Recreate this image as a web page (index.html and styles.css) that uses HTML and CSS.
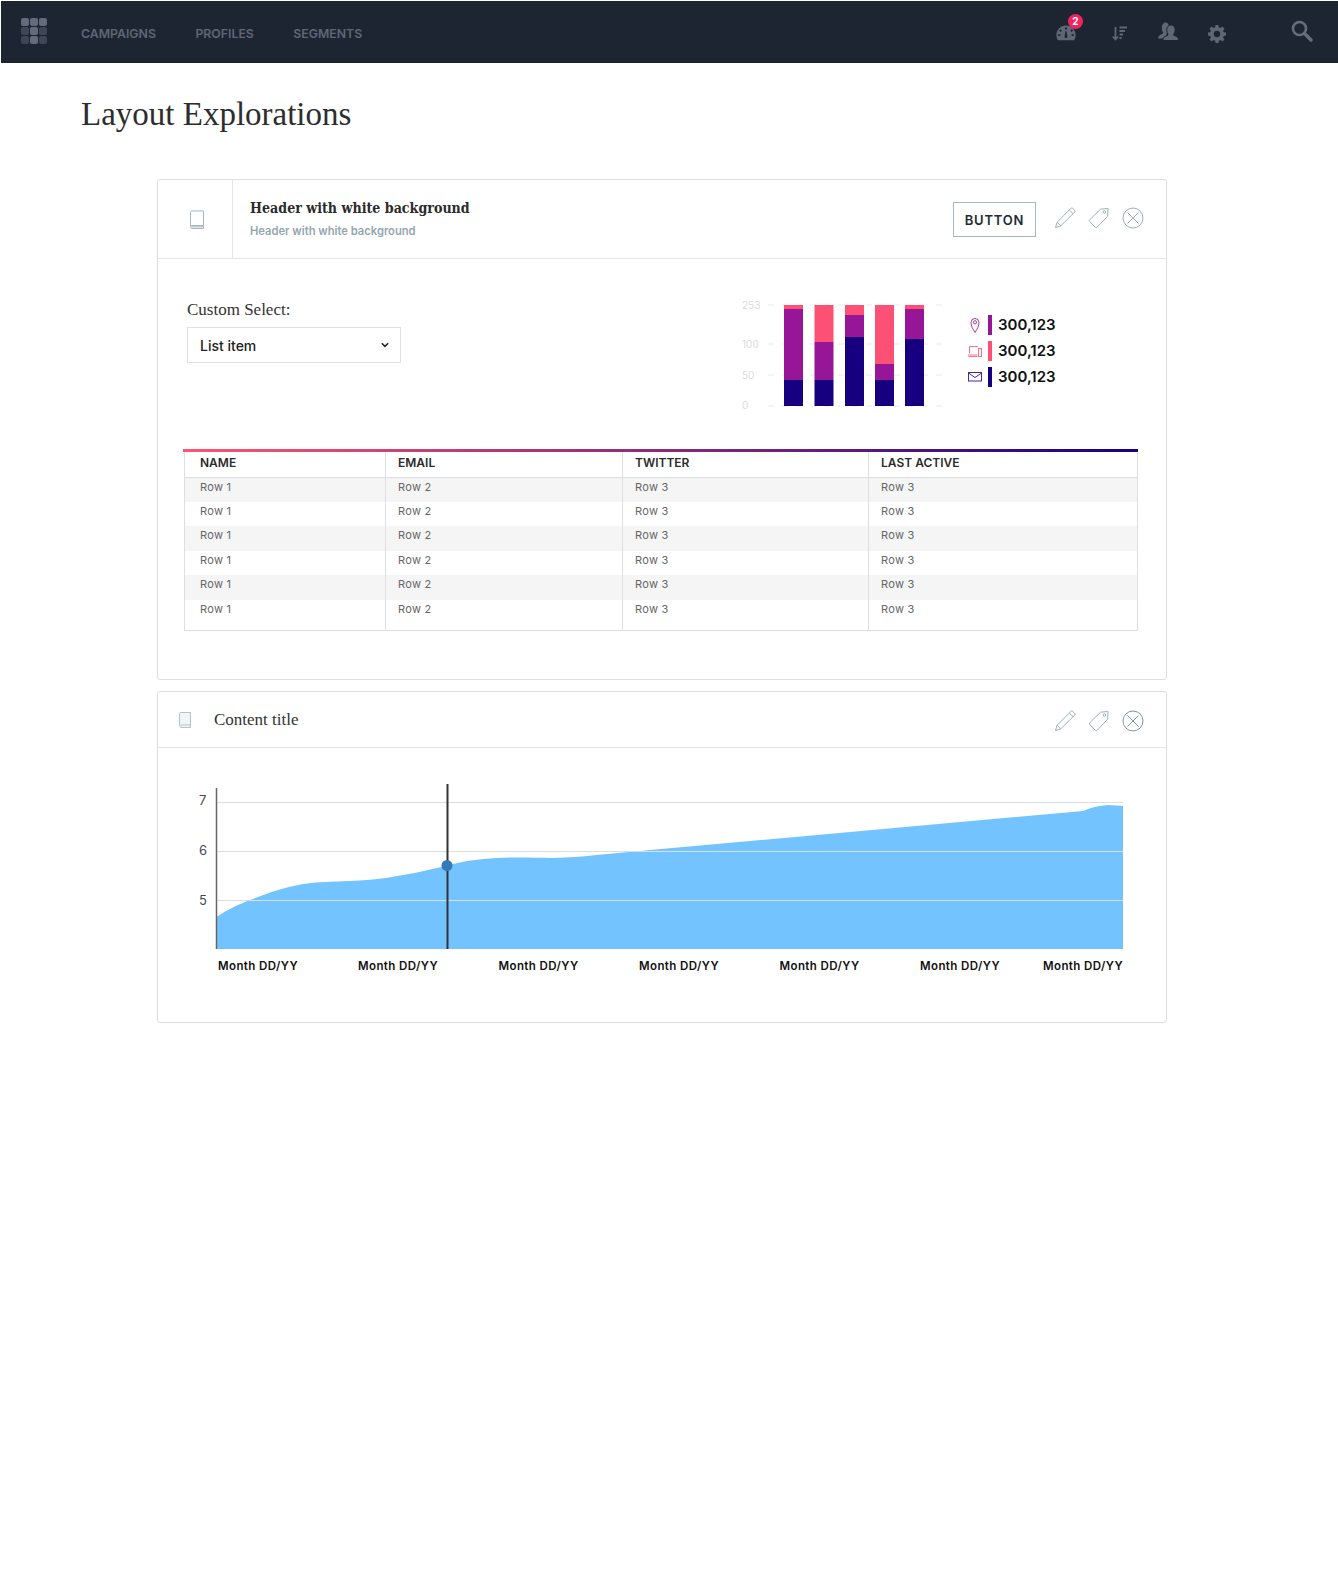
FILE: index.html
```html
<!DOCTYPE html>
<html lang="en">
<head>
  <meta charset="UTF-8" />
  <title>Layout Explorations</title>
  <link rel="stylesheet" href="styles.css">
</head>
<body>

  <!-- Navbar -->
  <div class="navbar">
    <div class="logo">
      <span class="c1"></span><span class="c1"></span><span class="c1"></span>
      <span class="c3"></span><span class="c1"></span><span class="c3"></span>
      <span class="c3"></span><span class="c1"></span><span class="c3"></span>
    </div>
    <div class="nav-links">
      <a>CAMPAIGNS</a>
      <a>PROFILES</a>
      <a>SEGMENTS</a>
    </div>
    <div class="nav-icons">
      <div class="nav-gauge">
        <svg width="20" height="16" viewBox="0 0 20 16"><path fill="#5f6676" fill-rule="evenodd" d="M10 .5C4.6.5.4 4.7.4 10c0 2 .5 3.8 1.4 5.3h16.4c.9-1.5 1.400-3.300 1.400-5.300C19.600 4.700 15.400.5 10 .5zM9 2.500h2v2H9zM4.300 4.200l1.600 1.500-1.300 1.300-1.500-1.600zM15.700 4.200l1.400 1.200-1.500 1.600-1.300-1.300zM2.200 9.200h2.200v1.900H2.200zM15.600 9.200h2.200v1.900h-2.200zM8.500 11.500L9.600 6h.8l1.100 5.500a1.500 1.500 0 1 1-3 0z"/></svg>
        <span class="badge">2</span>
      </div>
      <svg class="nav-sort" width="16" height="16" viewBox="0 0 16 16"><path fill="none" stroke="#5f6676" stroke-width="1.800" d="M3.500 1v12M.8 10.500l2.700 3 2.700-3M7.500 1.500h7.500M7.500 5h5.500M7.500 8.500h3.500M7.500 12h2"/></svg>
      <svg class="nav-users" width="21" height="20" viewBox="0 0 21 20"><path fill="#5f6676" d="M7.500 .5c2 0 3.500 1.800 3.500 4.300 0 2-.8 3.600-1.700 4.500-.3.400-.2.900.2 1.200L6 16.500H0c.2-1.400.6-2.500 1.800-3.300 1-.7 2.200-1.200 3-1.700.4-.3.500-.8.200-1.200C4.200 9.200 3.800 7.800 3.800 6.500 3.800 3 5.400.5 7.500.5z"/><path fill="#5f6676" stroke="#1e2532" stroke-width="1" d="M13 3c2.500 0 4.200 2 4.200 4.800 0 1.700-.6 3.200-1.400 4.200-.4.500-.3 1.100.3 1.400 1.300.6 2.800 1 3.600 1.900.6.700.8 1.800.8 3.200H5c0-1.400.2-2.500.8-3.200.8-.9 2.400-1.300 3.700-1.900.6-.3.700-.9.300-1.400C9 11 8.800 9.500 8.800 7.800 8.800 5 10.500 3 13 3z"/></svg>
      <svg class="nav-gear" width="18" height="18" viewBox="0 0 18 18"><path fill="#5f6676" fill-rule="evenodd" d="M7.500 0h3l.4 2.400 1.500.6 2-1.400 2.100 2.100-1.400 2 .6 1.500 2.300.3v3l-2.300.4-.6 1.500 1.400 2-2.100 2.100-2-1.400-1.500.6-.4 2.300h-3l-.4-2.300-1.500-.6-2 1.400-2.100-2.100 1.400-2-.6-1.500-2.300-.4v-3l2.300-.3.600-1.500-1.400-2 2.100-2.100 2 1.400 1.500-.6zM9 5.800a3.200 3.200 0 1 0 0 6.400 3.200 3.200 0 0 0 0-6.400z"/></svg>
      <svg class="nav-search" width="22" height="22" viewBox="0 0 22 22"><circle cx="8.500" cy="8.500" r="6.500" fill="none" stroke="#666d7b" stroke-width="2.600"/><path stroke="#666d7b" stroke-width="3.400" stroke-linecap="round" d="M13.500 13.500l6.500 6.500"/></svg>
    </div>
  </div>

  <h1 class="page-title">Layout Explorations</h1>

  <!-- Card with white header -->
  <div class="card card-first">
    <div class="card-head">
      <div class="head-icon">
        <svg width="16" height="20" viewBox="0 0 16 20"><path fill="none" stroke="#a3b5be" d="M1.500 16V2.500c0-1 .6-1.500 1.500-1.500h11.500v14.500H3c-1 0-1.500.6-1.500 1.500s.5 1.500 1.500 1.500h11.500v-3"/><path stroke="#a3b5be" d="M2 16.800h12"/></svg>
      </div>
      <div class="head-text">
        <div class="head-title">Header with white background</div>
        <div class="head-sub">Header with white background</div>
      </div>
      <div class="head-actions">
        <button class="btn">BUTTON</button>
        <svg width="22" height="22" viewBox="0 0 22 22"><path fill="none" stroke="#9fb0b8" d="M1.500 20.500l1.600-5.300L16.800 1.500c.6-.6 1.500-.6 2.100 0l1.600 1.600c.6.600.6 1.500 0 2.100L6.800 18.900zM3.100 15.200l3.700 3.700M15.300 3l3.700 3.700"/></svg>
        <svg width="22" height="22" viewBox="0 0 22 22"><path fill="none" stroke="#9fb0b8" d="M12.500 2.200L20 1.500l-.4 7.800L9 20.300c-.5.500-1.200.5-1.700 0L1.700 14.500c-.5-.5-.5-1.200 0-1.700z"/><circle cx="16.400" cy="5" r="1.300" fill="none" stroke="#9fb0b8"/></svg>
        <svg width="22" height="22" viewBox="0 0 22 22"><circle cx="11" cy="11" r="10" fill="none" stroke="#9fb0b8"/><path stroke="#9fb0b8" d="M5.500 5.500l11 11M16.500 5.500l-11 11"/></svg>
      </div>
    </div>

    <div class="card-body">
      <div class="top-row">
        <div class="select-wrap">
          <label class="select-label">Custom Select:</label>
          <div class="select-box">
            <span>List item</span>
            <svg width="8" height="6" viewBox="0 0 8 6"><path fill="none" stroke="#222" stroke-width="1.500" d="M.8 1.200L4 4.400l3.200-3.200"/></svg>
          </div>
        </div>

        <svg class="bars" width="190" height="118" viewBox="0 0 190 118">
          <g class="bars-grid">
            <line x1="22" y1="7" x2="202" y2="7"/>
            <line x1="22" y1="46" x2="202" y2="46"/>
            <line x1="22" y1="77" x2="202" y2="77"/>
            <line x1="22" y1="108" x2="202" y2="108"/>
          </g>
          <g class="bars-labels">
            <text x="-4" y="11">253</text>
            <text x="-4" y="50">100</text>
            <text x="-4" y="81">50</text>
            <text x="-4" y="111">0</text>
          </g>
          <rect x="38" y="7" width="19" height="4" fill="#fd5075"/><rect x="38" y="11" width="19" height="71" fill="#971597"/><rect x="38" y="82" width="19" height="26" fill="#170080"/>
          <rect x="68.500" y="7" width="19" height="37" fill="#fd5075"/><rect x="68.500" y="44" width="19" height="38" fill="#971597"/><rect x="68.500" y="82" width="19" height="26" fill="#170080"/>
          <rect x="99" y="7" width="19" height="10" fill="#fd5075"/><rect x="99" y="17" width="19" height="22" fill="#971597"/><rect x="99" y="39" width="19" height="69" fill="#170080"/>
          <rect x="129" y="7" width="19" height="59" fill="#fd5075"/><rect x="129" y="66" width="19" height="16" fill="#971597"/><rect x="129" y="82" width="19" height="26" fill="#170080"/>
          <rect x="159" y="7" width="19" height="4" fill="#fd5075"/><rect x="159" y="11" width="19" height="30" fill="#971597"/><rect x="159" y="41" width="19" height="67" fill="#170080"/>
        </svg>

        <div class="legend">
          <div class="legend-row">
            <svg width="14" height="16" viewBox="0 0 14 16"><path fill="none" stroke="#a93ba9" d="M7 15.500C4.500 11.500 3 8.800 3 5.500a4 4 0 0 1 8 0c0 3.300-1.500 6-4 10z"/><circle cx="7" cy="5.300" r="1.600" fill="none" stroke="#a93ba9"/></svg>
            <span class="swatch purple"></span>
            <span class="num">300,123</span>
          </div>
          <div class="legend-row">
            <svg width="14" height="16" viewBox="0 0 14 16"><path fill="none" stroke="#fd6f8d" d="M1.500 10.500V3.500h8.500M0 12h9.500M.5 13.500h9"/><rect x="10.500" y="5.500" width="3" height="8" fill="none" stroke="#fd6f8d"/></svg>
            <span class="swatch pink"></span>
            <span class="num">300,123</span>
          </div>
          <div class="legend-row">
            <svg width="14" height="16" viewBox="0 0 14 16"><rect x=".5" y="3.500" width="13" height="8.500" fill="none" stroke="#3f2c9a"/><path fill="none" stroke="#3f2c9a" d="M.5 4l6.500 4.500L13.500 4"/></svg>
            <span class="swatch navy"></span>
            <span class="num">300,123</span>
          </div>
        </div>
      </div>

      <div class="table-rule"></div>
      <table class="data-table">
        <thead>
          <tr><th class="col1">NAME</th><th class="col2">EMAIL</th><th class="col3">TWITTER</th><th>LAST ACTIVE</th></tr>
        </thead>
        <tbody>
          <tr><td>Row 1</td><td>Row 2</td><td>Row 3</td><td>Row 3</td></tr>
          <tr><td>Row 1</td><td>Row 2</td><td>Row 3</td><td>Row 3</td></tr>
          <tr><td>Row 1</td><td>Row 2</td><td>Row 3</td><td>Row 3</td></tr>
          <tr><td>Row 1</td><td>Row 2</td><td>Row 3</td><td>Row 3</td></tr>
          <tr><td>Row 1</td><td>Row 2</td><td>Row 3</td><td>Row 3</td></tr>
          <tr class="last-row"><td>Row 1</td><td>Row 2</td><td>Row 3</td><td>Row 3</td></tr>
        </tbody>
      </table>
    </div>
  </div>

  <!-- Card with area chart -->
  <div class="card card-second">
    <div class="card-head small">
      <svg class="small-book" width="12" height="16" viewBox="0 0 12 16"><path fill="#f2f5f6" stroke="#b4c2c9" d="M.5 13V2C.5 1 1 .5 2 .5h9.500v12.500H2c-1 0-1.500.4-1.500 1s.5 1.500 1.500 1.500h9.500v-3"/></svg>
      <div class="small-title">Content title</div>
      <div class="head-actions">
        <svg width="22" height="22" viewBox="0 0 22 22"><path fill="none" stroke="#9fb0b8" d="M1.500 20.500l1.600-5.300L16.800 1.500c.6-.6 1.500-.6 2.100 0l1.600 1.600c.6.600.6 1.500 0 2.100L6.800 18.900zM3.100 15.200l3.700 3.700M15.300 3l3.700 3.700"/></svg>
        <svg width="22" height="22" viewBox="0 0 22 22"><path fill="none" stroke="#9fb0b8" d="M12.500 2.200L20 1.500l-.4 7.800L9 20.300c-.5.500-1.200.5-1.700 0L1.700 14.500c-.5-.5-.5-1.200 0-1.700z"/><circle cx="16.400" cy="5" r="1.300" fill="none" stroke="#9fb0b8"/></svg>
        <svg width="22" height="22" viewBox="0 0 22 22"><circle cx="11" cy="11" r="10" fill="none" stroke="#7f969f"/><path stroke="#7f969f" d="M5.500 5.500l11 11M16.500 5.500l-11 11"/></svg>
      </div>
    </div>

    <!-- viewBox starts near the card's left edge, so x values are page x -->
    <svg class="area-chart" width="1008" height="274" viewBox="158 748 1008 274">
      <path fill="#72c3ff" d="M216.500 917C228 909 240 904 250 900C275 890 297 884 316 882.500C335 881.500 352 881 367 880C395 877.500 420 872 447 865.700C463 861 478 859 497 858C515 857 535 857.500 550 858C575 858 610 853.600 650 850L1083 811C1090 808 1097 806 1108 805L1123 806V949H216.500Z"/>
      <g class="area-grid">
        <line x1="216" y1="802.500" x2="1123" y2="802.500"/>
        <line x1="216" y1="851.500" x2="1123" y2="851.500"/>
        <line x1="216" y1="900.500" x2="1123" y2="900.500"/>
      </g>
      <line class="area-axis" x1="216.500" y1="788" x2="216.500" y2="949"/>
      <line class="area-cursor" x1="447.500" y1="784" x2="447.500" y2="949"/>
      <circle cx="447" cy="865.500" r="5.500" fill="#337ab7"/>
      <g class="area-y">
        <text x="199" y="805">7</text>
        <text x="199" y="855">6</text>
        <text x="199" y="905">5</text>
      </g>
      <g class="area-x">
        <text x="218" y="970">Month DD/YY</text>
        <text x="358" y="970">Month DD/YY</text>
        <text x="498.500" y="970">Month DD/YY</text>
        <text x="639" y="970">Month DD/YY</text>
        <text x="779.500" y="970">Month DD/YY</text>
        <text x="920" y="970">Month DD/YY</text>
        <text x="1123" y="970" text-anchor="end">Month DD/YY</text>
      </g>
    </svg>
  </div>

</body>
</html>
```

FILE: styles.css
```css
body {
  margin: 0;
  padding: 1px 0 0 1px;
  font-family: 'Inter', sans-serif;
  background-color: white;
  color: #222;
}

.navbar {
  height: 62px;
  background-color: #1e2532;
  display: flex;
  align-items: center;
}

.logo {
  display: grid;
  grid-template-columns: repeat(3, 8px);
  grid-auto-rows: 8px;
  gap: 1px;
  margin-left: 20px;
  margin-top: -2px;
}

.logo span {
  border-radius: 2px;
}

.logo .c1 {
  background: #646b7c;
}

.logo .c3 {
  background: #3f4656;
}

.nav-links {
  display: flex;
  gap: 39.500px;
  margin-left: 34px;
  margin-top: 2px;
}

.nav-links a {
  color: #5f6676;
  font-size: 12.300px;
  font-weight: 600;
}

.nav-icons {
  display: flex;
  align-items: center;
  margin-left: auto;
  margin-right: 25px;
}

.nav-gauge {
  position: relative;
  height: 16px;
  margin-top: 2px;
}

.nav-gauge svg {
  display: block;
}

.badge {
  position: absolute;
  left: 12px;
  top: -11px;
  width: 15px;
  height: 15px;
  border-radius: 50%;
  background: #f0245f;
  color: white;
  font-size: 10px;
  font-weight: 700;
  line-height: 15px;
  text-align: center;
}

.nav-sort {
  margin-left: 36px;
  margin-top: 3px;
}

.nav-users {
  margin-left: 30px;
}

.nav-gear {
  margin-left: 29px;
  margin-top: 3px;
}

.nav-search {
  margin-left: 65px;
  margin-top: -2px;
}

.page-title {
  font-family: 'Liberation Serif', serif;
  font-weight: 400;
  font-size: 33px;
  line-height: 40px;
  color: #2d2d2d;
  margin: 31px 0 0 80px;
}

.card {
  width: 1010px;
  margin-left: 156px;
  border: 1px solid #dcdfe1;
  border-radius: 3px;
  box-sizing: border-box;
}

.card-first {
  height: 501px;
  margin-top: 45px;
}

.card-second {
  height: 332px;
  margin-top: 11px;
}

.card-head {
  display: flex;
  align-items: center;
  height: 78px;
  border-bottom: 1px solid #e2e4e6;
}

.head-icon {
  width: 71px;
  height: 76px;
  padding: 2px 0 0 3px;
  border-right: 1px solid #e2e4e6;
  display: flex;
  align-items: center;
  justify-content: center;
  flex-shrink: 0;
}

.head-text {
  margin-left: 17px;
}

.head-title {
  font-family: 'DejaVu Serif', serif;
  font-stretch: condensed;
  font-weight: 700;
  font-size: 14.100px;
  color: #2b2b2b;
}

.head-sub {
  font-size: 11.200px;
  font-weight: 600;
  color: #93a6b0;
  margin-top: 8px;
}

.head-actions {
  display: flex;
  align-items: center;
  gap: 12px;
  margin-left: auto;
  margin-right: 22px;
  margin-top: -2px;
}

.small .head-actions {
  margin-top: 2px;
}

.btn {
  width: 83px;
  height: 35px;
  margin: 2px 6px 0 0;
  padding-top: 2px;
  background: white;
  border: 1px solid #a9b8bf;
  font-family: 'Inter', sans-serif;
  font-size: 13px;
  font-weight: 600;
  letter-spacing: 0.800px;
  color: #222b33;
}

.card-body {
  padding: 0 28px 0 26px;
}

.top-row {
  display: flex;
  height: 190px;
}

.select-wrap {
  margin: 41px 0 0 3px;
  width: 214px;
}

.select-label {
  display: block;
  font-family: 'Liberation Serif', serif;
  font-size: 17px;
  line-height: 20px;
  color: #333;
  margin-bottom: 7px;
}

.select-box {
  height: 36px;
  box-sizing: border-box;
  border: 1px solid #dfe2e4;
  display: flex;
  align-items: center;
  justify-content: space-between;
  padding: 0 11px 0 12px;
  font-size: 14px;
  font-weight: 500;
  color: #222;
}

.bars {
  margin: 39px 0 0 345px;
  flex-shrink: 0;
  overflow: visible;
}

.bars-grid line {
  stroke: #e9e9e9;
  stroke-dasharray: 6 8;
}

.bars-labels text {
  font-size: 10px;
  fill: #d9dbdd;
}

.legend {
  margin: 55.500px 0 0 32px;
}

.legend-row {
  display: flex;
  align-items: center;
  height: 20px;
  margin-bottom: 6px;
}

.swatch {
  width: 4px;
  height: 20px;
  margin: 0 6px 0 6px;
}

.swatch.purple {
  background: #971597;
}

.swatch.pink {
  background: #fd5075;
}

.swatch.navy {
  background: #170080;
}

.num {
  font-size: 15px;
  font-weight: 600;
  color: #111;
}

.table-rule {
  width: 955px;
  height: 3px;
  margin-left: -1px;
  background: linear-gradient(90deg, #ff5570, #170080);
}

.data-table {
  border-collapse: collapse;
  table-layout: fixed;
  width: 954px;
}

.data-table th, .data-table td {
  border-left: 1px solid #dcdfe1;
  border-right: 1px solid #dcdfe1;
  padding: 0 0 0 12px;
  text-align: left;
  box-sizing: border-box;
}

.data-table th:first-child, .data-table td:first-child {
  padding-left: 15px;
}

.data-table th {
  height: 25px;
  padding-bottom: 3px;
  font-size: 12px;
  font-weight: 600;
  color: #2b2b2b;
  border-bottom: 1px solid #dcdfe1;
}

.data-table td {
  height: 24.500px;
  font-size: 11px;
  color: #666;
  letter-spacing: 0.300px;
  padding-bottom: 6px;
}

.data-table tbody tr:nth-child(odd) td {
  background: #f5f5f5;
}

.data-table .last-row td {
  height: 31px;
  padding-bottom: 12px;
  border-bottom: 1px solid #dcdfe1;
}

.col1 {
  width: 201px;
}

.col2 {
  width: 237px;
}

.col3 {
  width: 246px;
}

.small-book {
  margin-left: 21px;
  flex-shrink: 0;
}

.card-head.small {
  height: 55px;
}

.small-title {
  font-family: 'Liberation Serif', serif;
  font-size: 17px;
  color: #333;
  margin-left: 23px;
}

.area-chart {
  display: block;
}

.area-grid line {
  stroke: #d9dee2;
  stroke-width: 1;
}

.area-axis {
  stroke: #666;
  stroke-width: 1.500;
}

.area-cursor {
  stroke: #333;
  stroke-width: 2;
}

.area-y text {
  font-size: 13px;
  fill: #3f4a5a;
}

.area-x text {
  font-size: 11.500px;
  font-weight: 600;
  fill: #111;
  letter-spacing: 0.400px;
}
```
